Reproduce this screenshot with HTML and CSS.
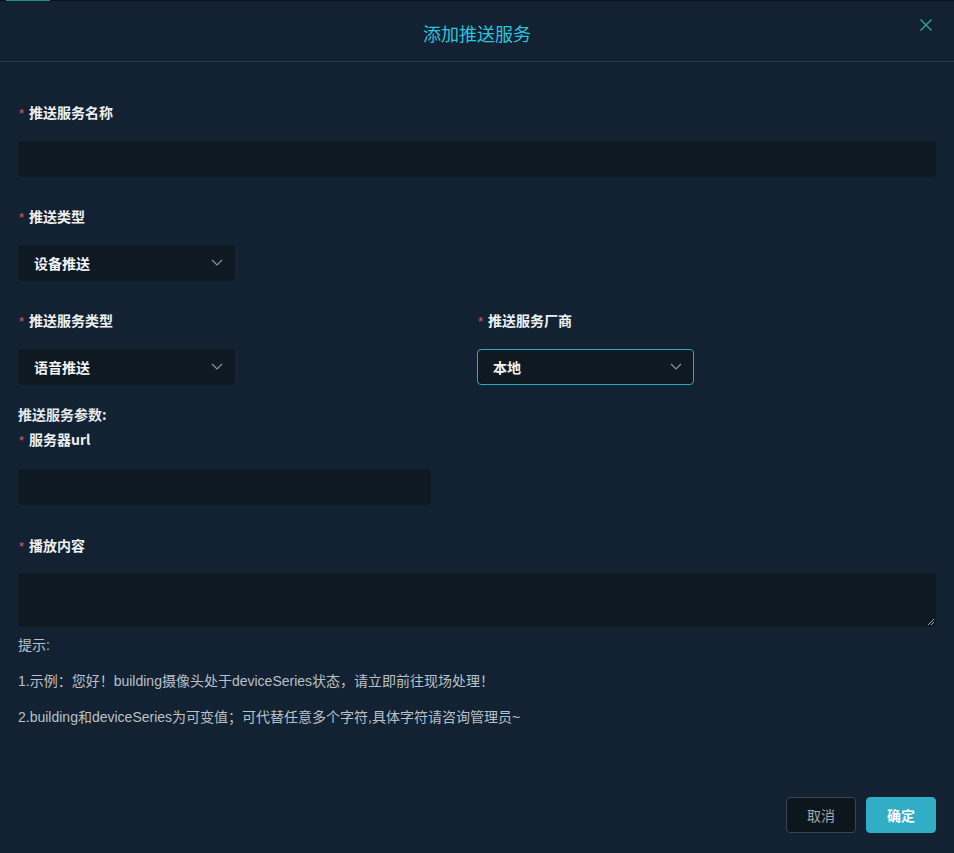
FILE: index.html
```html
<!DOCTYPE html>
<html lang="zh-CN">
<head>
<meta charset="utf-8">
<title>添加推送服务</title>
<link rel="stylesheet" href="styles.css">
</head>
<body>
<div class="topstrip"><span class="topmark"></span></div>
<div class="dialog">
  <header class="dlg-head">
    <h1 class="dlg-title">添加推送服务</h1>
    <button class="dlg-close" aria-label="关闭">
      <svg width="14" height="14" viewBox="0 0 14 14"><path d="M1.5 1.5 L12.5 12.5 M12.5 1.5 L1.5 12.5" stroke="#2aa898" stroke-width="1.4" fill="none"/></svg>
    </button>
  </header>
  <main class="dlg-body">
    <div class="field f1">
      <label class="lbl"><span class="req">*</span>推送服务名称</label>
      <div class="input full"></div>
    </div>
    <div class="field f2">
      <label class="lbl"><span class="req">*</span>推送类型</label>
      <div class="select"><span>设备推送</span><svg class="chev" width="12" height="7" viewBox="0 0 12 7"><path d="M1 1 L6 6 L11 1" stroke="#8a949e" stroke-width="1.2" fill="none"/></svg></div>
    </div>
    <div class="row f3">
      <div class="field col">
        <label class="lbl"><span class="req">*</span>推送服务类型</label>
        <div class="select"><span>语音推送</span><svg class="chev" width="12" height="7" viewBox="0 0 12 7"><path d="M1 1 L6 6 L11 1" stroke="#8a949e" stroke-width="1.2" fill="none"/></svg></div>
      </div>
      <div class="field col">
        <label class="lbl"><span class="req">*</span>推送服务厂商</label>
        <div class="select active"><span>本地</span><svg class="chev" width="12" height="7" viewBox="0 0 12 7"><path d="M1 1 L6 6 L11 1" stroke="#8a949e" stroke-width="1.2" fill="none"/></svg></div>
      </div>
    </div>
    <div class="section-title">推送服务参数:</div>
    <div class="field f4">
      <label class="lbl"><span class="req">*</span>服务器url</label>
      <div class="input half"></div>
    </div>
    <div class="field f5">
      <label class="lbl"><span class="req">*</span>播放内容</label>
      <div class="textarea">
        <svg class="grip" width="8" height="8" viewBox="0 0 8 8"><path d="M7 1 L1 7 M7 4 L4 7" stroke="#c8cdd2" stroke-width="0.8" fill="none"/></svg>
      </div>
    </div>
    <div class="tips">
      <p class="tip-head">提示:</p>
      <p>1.示例：您好！building摄像头处于deviceSeries状态，请立即前往现场处理！</p>
      <p>2.building和deviceSeries为可变值；可代替任意多个字符,具体字符请咨询管理员~</p>
    </div>
  </main>
  <footer class="dlg-foot">
    <button class="btn cancel">取消</button>
    <button class="btn ok">确定</button>
  </footer>
</div>
</body>
</html>
```
FILE: styles.css
```css
* { box-sizing: border-box; }
html, body {
  margin: 0;
  padding: 0;
  background: #132232;
  font-family: "Liberation Sans", "Noto Sans CJK SC", sans-serif;
  color: #e6e9ec;
}
.topstrip {
  height: 1px;
  background: #0a121a;
  position: relative;
}
.topmark {
  position: absolute;
  left: 6px;
  top: 0;
  width: 44px;
  height: 1px;
  background: #1f8e8e;
}
.dialog {
  width: 954px;
  height: 852px;
  display: flex;
  flex-direction: column;
}
.dlg-head {
  height: 61px;
  border-bottom: 1px solid #28384a;
  display: flex;
  align-items: center;
  justify-content: center;
  position: relative;
}
.dlg-title {
  margin: 0;
  margin-top: 3px;
  font-size: 18px;
  font-weight: normal;
  color: #2ec3dc;
  font-family: "Noto Sans CJK SC", sans-serif;
}
.dlg-close {
  position: absolute;
  right: 21px;
  top: 17px;
  width: 14px;
  height: 14px;
  padding: 0;
  border: 0;
  background: none;
  display: flex;
}
.dlg-body {
  padding: 40px 18px 0 18px;
  flex: 1;
}
.field { display: flex; flex-direction: column; }
.lbl {
  height: 20px;
  line-height: 20px;
  font-size: 14px;
  font-weight: bold;
  color: #eef1f3;
  margin-bottom: 19px;
  font-family: "Noto Sans CJK SC", sans-serif;
}
.req {
  color: #e0575a;
  font-weight: normal;
  font-size: 13px;
  margin-left: 1px;
  margin-right: 5px;
  font-family: "Liberation Sans", sans-serif;
}
.input {
  height: 36px;
  background: #0f1922;
  border-radius: 4px;
}
.input.full { width: 918px; }
.input.half { width: 413px; }
.f2 { margin-top: 29px; }
.f3 { margin-top: 29px; }
.row { display: flex; }
.col { width: 459px; }
.select {
  width: 217px;
  height: 36px;
  background: #0f1922;
  border-radius: 4px;
  border: 1px solid #0f1922;
  display: flex;
  align-items: center;
  justify-content: space-between;
  padding: 0 11px 1px 15px;
  font-size: 14px;
  font-weight: bold;
  color: #f2f4f6;
  font-family: "Noto Sans CJK SC", sans-serif;
}
.select.active { border-color: #2fa7bf; }
.section-title {
  margin-top: 19px;
  height: 20px;
  line-height: 20px;
  font-size: 14px;
  font-weight: bold;
  color: #e6e9ec;
  font-family: "Noto Sans CJK SC", sans-serif;
}
.f4 { margin-top: 5px; }
.f4 .lbl { margin-bottom: 20px; }
.f5 { margin-top: 30px; }
.f5 .lbl { margin-bottom: 18px; }
.textarea {
  width: 918px;
  height: 54px;
  background: #0f1922;
  border-radius: 4px;
  position: relative;
}
.grip { position: absolute; right: 1px; bottom: 1px; }
.tips {
  margin-top: 8px;
  font-size: 14px;
  color: #b9c0c7;
}
.tips p {
  margin: 0;
  height: 20px;
  line-height: 20px;
}
.tips p + p { margin-top: 16px; }
.dlg-foot {
  display: flex;
  justify-content: flex-end;
  gap: 10px;
  padding: 0 18px 20px 0;
}
.btn {
  width: 70px;
  height: 36px;
  border-radius: 4px;
  font-size: 14px;
  font-family: "Noto Sans CJK SC", sans-serif;
  padding: 0;
}
.cancel {
  background: #0d151d;
  border: 1px solid #3a444e;
  color: #a2a9b0;
}
.ok {
  background: #31adc6;
  border: 1px solid #31adc6;
  color: #ffffff;
  font-weight: bold;
}
```
